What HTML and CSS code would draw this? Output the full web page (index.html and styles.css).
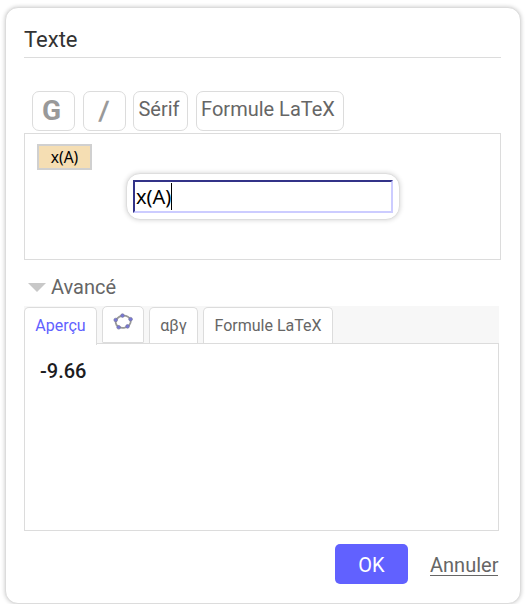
FILE: index.html
```html
<!DOCTYPE html>
<html lang="fr">
<head>
<meta charset="utf-8">
<title>Texte</title>
<link rel="stylesheet" href="styles.css">
</head>
<body>
<main class="dialog">
  <h1 class="title"><span>Texte</span></h1>
  <div class="toolbar">
    <button class="tool bold"><span>G</span></button>
    <button class="tool italic"><span>/</span></button>
    <button class="tool serif"><span>Sérif</span></button>
    <button class="tool latex"><span>Formule LaTeX</span></button>
  </div>
  <section class="editor">
    <span class="chip"><span>x(A)</span></span>
    <div class="popup"><div class="field"><span>x(A)</span><i class="caret"></i></div></div>
  </section>
  <div class="advanced">
    <svg class="arrow" width="18" height="9" viewBox="0 0 18 9"><path d="M0 0H18L9 9Z" fill="#c8c8c8"/></svg>
    <span>Avancé</span>
  </div>
  <nav class="tabs">
    <button class="tab active"><span>Aperçu</span></button>
    <button class="tab shapes" aria-label="Objets">
      <svg width="22" height="20" viewBox="0 0 22 20">
        <ellipse cx="11.2" cy="9.8" rx="7.6" ry="6.1" transform="rotate(-8 11.2 9.8)" fill="none" stroke="#999" stroke-width="1.8"/>
        <g fill="#7777d8" stroke="#777799" stroke-width=".7">
          <circle cx="10.5" cy="3.6" r="1.8"/><circle cx="18.6" cy="7.2" r="1.8"/><circle cx="15.5" cy="14.4" r="1.8"/><circle cx="6.7" cy="15.3" r="1.8"/><circle cx="3.7" cy="8" r="1.8"/>
        </g>
      </svg>
    </button>
    <button class="tab greek"><span>αβγ</span></button>
    <button class="tab formula"><span>Formule LaTeX</span></button>
  </nav>
  <section class="preview"><span>-9.66</span></section>
  <footer class="actions">
    <button class="ok"><span>OK</span></button>
    <button class="cancel"><span>Annuler</span></button>
  </footer>
</main>
</body>
</html>
```
FILE: styles.css
```css
* { box-sizing: border-box; }
body { margin: 0; background: #fff; font-family: Roboto, sans-serif; color: #666; }
button { font: inherit; color: inherit; margin: 0; padding: 0; background: #fff; border: 1px solid #dcdcdc; }
.dialog {
  width: 516px; height: 597px; margin: 7px 0 0 5px; padding: 0 18px;
  border: 1px solid #dcdcdc; border-radius: 13px; background: #fff;
  box-shadow: 0 0 4px rgba(0, 0, 0, .22);
}
.title { width: 477px; height: 50px; margin: 0; padding-top: 19px; border-bottom: 1px solid #dcdcdc; font-size: 22px; line-height: 26px; font-weight: 400; color: #333; }
.toolbar { display: flex; height: 40px; margin: 33px 0 0 8px; }
.tool { height: 40px; border-radius: 7px; font-size: 20px; line-height: 24px; padding-bottom: 5px; }
.bold { width: 43px; margin-right: 8px; padding: 0 4px 0 0; font-size: 28px; font-weight: 700; color: #999; }
.italic { width: 43px; margin-right: 7px; padding: 0; font-size: 27px; font-weight: 700; color: #999; }
.italic span { display: inline-block; transform: skewX(-3deg); }
.serif { width: 55px; margin-right: 8px; padding-right: 3px; }
.latex { width: 148px; padding-right: 4px; }
.editor { position: relative; width: 477px; height: 127px; margin-top: 2px; padding: 10px 12px; border: 1px solid #dcdcdc; }
.chip { display: flex; align-items: center; justify-content: center; width: 55px; height: 26px; padding-bottom: 1px; border: 2px solid #d0d0d0; background: #f5deb3; color: #000; font: 15.5px/20px "Noto Sans", sans-serif; }
.popup { position: absolute; left: 101px; top: 39px; width: 274px; height: 47px; padding: 7px; border: 1px solid #dedede; border-radius: 14px; background: #fff; box-shadow: 0 0 5px rgba(0, 0, 0, .18); }
.field { display: flex; align-items: center; width: 260px; height: 33px; margin: -1px; border: 2px solid; border-color: #333388 #ccccff #ccccff #333388; padding-left: 1px; font: 20px/27px "Noto Sans", sans-serif; color: #000; }
.caret { width: 1px; height: 27px; background: #000; }
.advanced { display: flex; align-items: center; height: 28px; margin-top: 13px; padding-left: 4px; font-size: 20px; line-height: 28px; }
.arrow { margin-right: 5px; }
.tabs { display: flex; align-items: flex-start; width: 475px; height: 37px; margin-top: 5px; background: #f7f7f7; }
.tab { height: 36px; margin-top: 1px; border-bottom: 0; border-radius: 5px 5px 0 0; font-size: 16px; line-height: 20px; }
.active { position: relative; height: 38px; padding-bottom: 2px; width: 73px; margin-right: 5px; color: #6161ff; }
.shapes { width: 42px; height: 37px; margin: 0 5px 0 0; padding-bottom: 5px; border-bottom: 1px solid #dcdcdc; border-radius: 5px 5px 1px 1px; }
.shapes svg { display: block; margin: auto; }
.greek { width: 49px; margin-right: 5px; }
.formula { width: 130px; }
.preview { width: 475px; height: 188px; padding: 14px 15px; border: 1px solid #dcdcdc; font: 500 20px/27px Roboto, sans-serif; color: #1c1c1f; }
.actions { display: flex; align-items: center; justify-content: flex-end; width: 474px; height: 40px; margin-top: 13px; font-size: 20px; }
.ok { width: 73px; height: 40px; margin-right: 22px; padding-top: 2px; border: 0; border-radius: 5px; background: #6161ff; color: #fff; }
.cancel { width: 68px; margin-top: 2px; border: 0; border-bottom: 1px solid #666; line-height: 20px; white-space: nowrap; }
```
